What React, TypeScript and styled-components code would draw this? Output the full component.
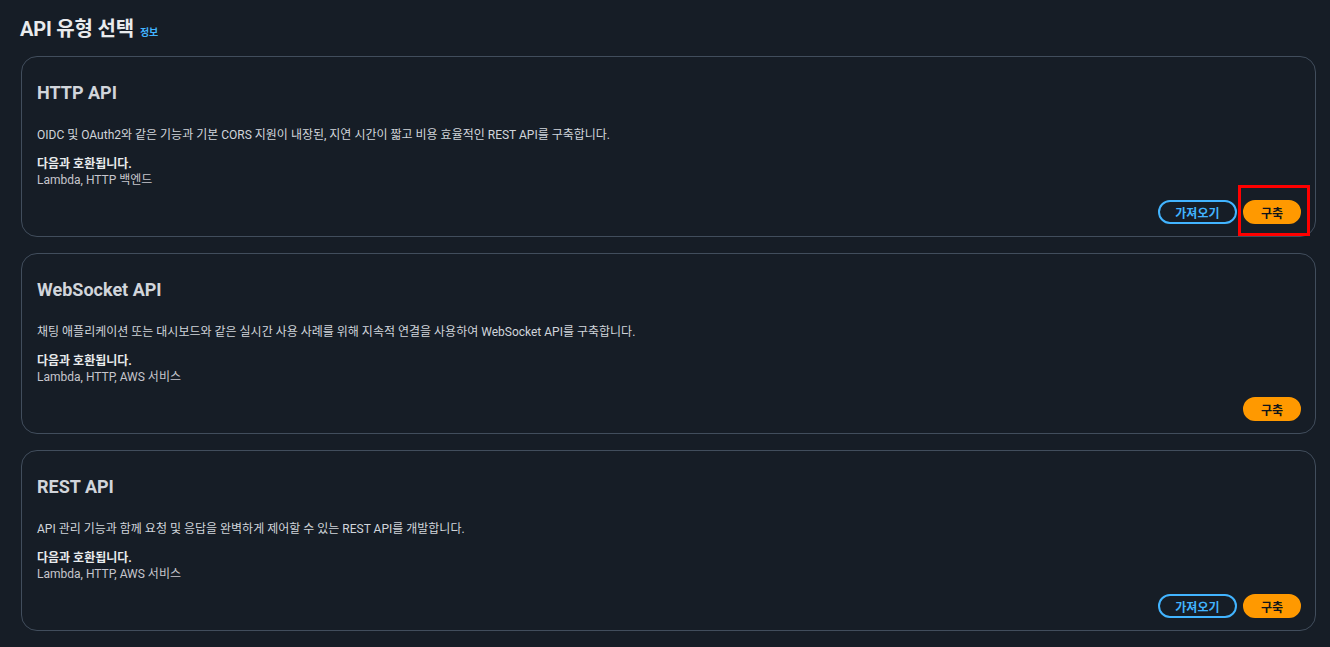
import React from "react";
import styled, { createGlobalStyle } from "styled-components";

const FONT = `Roboto, "Noto Sans CJK KR", sans-serif`;

const GlobalStyle = createGlobalStyle`
  html, body {
    margin: 0;
    padding: 0;
    background: #161d26;
  }
  body {
    font-family: ${FONT};
    color: #d1d5db;
  }
`;

const Page = styled.main`
  padding: 15px 14px 16px 20px;
  display: flex;
  flex-direction: column;
`;

const Heading = styled.h1`
  margin: 0 0 9px 0;
  display: flex;
  align-items: baseline;
  gap: 6px;
  font-size: 20px;
  line-height: 28px;
  font-weight: 700;
  color: #e9ebed;
  letter-spacing: -0.2px;
`;

const InfoLink = styled.a`
  font-size: 10px;
  font-weight: 700;
  color: #42b4ff;
  text-decoration: none;
`;

const CardList = styled.div`
  display: flex;
  flex-direction: column;
  gap: 16px;
  padding-left: 1px;
`;

const Card = styled.section`
  position: relative;
  border: 1px solid #414d5c;
  border-radius: 16px;
  padding: 23px 14px 12px 15px;
  display: flex;
  flex-direction: column;
`;

const CardTitle = styled.h2`
  margin: 0;
  font-size: 18px;
  line-height: 26px;
  font-weight: 700;
  color: #d1d5db;
`;

const Description = styled.p`
  margin: 21px 0 0 0;
  font-size: 12px;
  line-height: 16px;
  color: #d1d5db;
`;

const CompatLabel = styled.div`
  margin-top: 13px;
  font-size: 12px;
  line-height: 16px;
  font-weight: 700;
  color: #e9ebed;
`;

const CompatList = styled.div`
  font-size: 12px;
  line-height: 16px;
  color: #c6c6cd;
`;

const Actions = styled.div`
  margin-top: 12px;
  display: flex;
  justify-content: flex-end;
  gap: 6px;
`;

const Button = styled.button<{ $primary?: boolean }>`
  height: 24px;
  box-sizing: border-box;
  border-radius: 12px;
  font-family: ${FONT};
  font-size: 12px;
  font-weight: 700;
  cursor: pointer;
  padding: 0 ${(p) => (p.$primary ? "16px" : "14px")};
  min-width: ${(p) => (p.$primary ? "57px" : "79px")};
  border: ${(p) => (p.$primary ? "2px solid #ff9900" : "2px solid #42b4ff")};
  background: ${(p) => (p.$primary ? "#ff9900" : "transparent")};
  color: ${(p) => (p.$primary ? "#0f141a" : "#42b4ff")};
`;

const Highlight = styled.div`
  position: absolute;
  right: 5px;
  bottom: 0px;
  width: 72px;
  height: 51px;
  box-sizing: border-box;
  border: 3px solid #ff0000;
  pointer-events: none;
`;

type ApiType = {
  title: string;
  description: string;
  compat: string;
  canImport: boolean;
  highlight?: boolean;
};

const apiTypes: ApiType[] = [
  {
    title: "HTTP API",
    description:
      "OIDC 및 OAuth2와 같은 기능과 기본 CORS 지원이 내장된, 지연 시간이 짧고 비용 효율적인 REST API를 구축합니다.",
    compat: "Lambda, HTTP 백엔드",
    canImport: true,
    highlight: true,
  },
  {
    title: "WebSocket API",
    description:
      "채팅 애플리케이션 또는 대시보드와 같은 실시간 사용 사례를 위해 지속적 연결을 사용하여 WebSocket API를 구축합니다.",
    compat: "Lambda, HTTP, AWS 서비스",
    canImport: false,
  },
  {
    title: "REST API",
    description:
      "API 관리 기능과 함께 요청 및 응답을 완벽하게 제어할 수 있는 REST API를 개발합니다.",
    compat: "Lambda, HTTP, AWS 서비스",
    canImport: true,
  },
];

export default function App() {
  return (
    <>
      <GlobalStyle />
      <Page>
        <Heading>
          API 유형 선택 <InfoLink href="#">정보</InfoLink>
        </Heading>
        <CardList>
          {apiTypes.map((api) => (
            <Card key={api.title}>
              <CardTitle>{api.title}</CardTitle>
              <Description>{api.description}</Description>
              <CompatLabel>다음과 호환됩니다.</CompatLabel>
              <CompatList>{api.compat}</CompatList>
              <Actions>
                {api.canImport && <Button>가져오기</Button>}
                <Button $primary>구축</Button>
              </Actions>
              {api.highlight && <Highlight />}
            </Card>
          ))}
        </CardList>
      </Page>
    </>
  );
}
